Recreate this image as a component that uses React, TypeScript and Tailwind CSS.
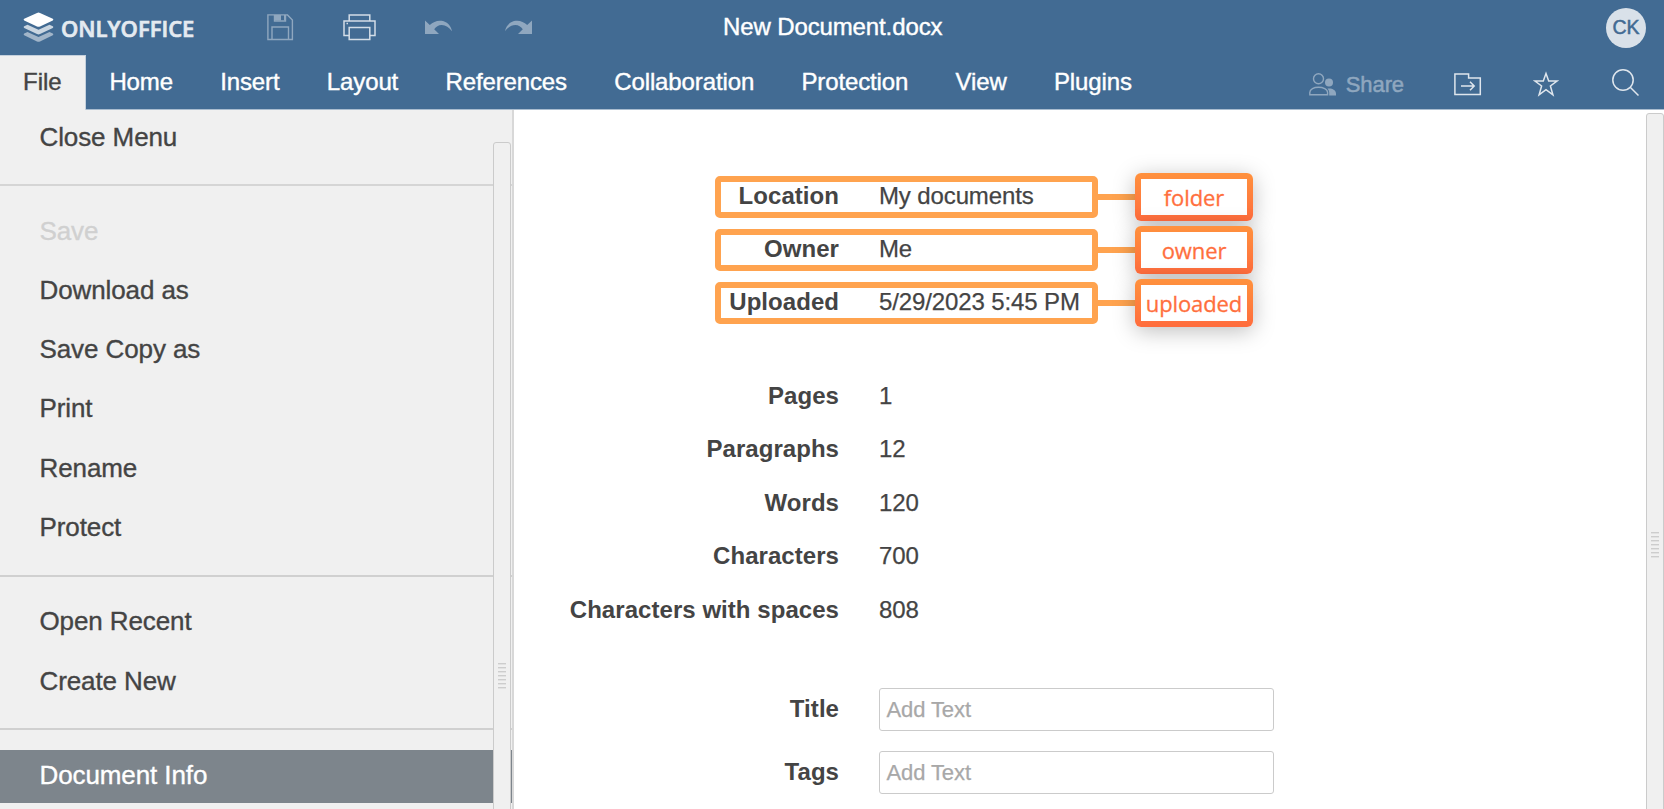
import React from "react";

const tabs = ["Home", "Insert", "Layout", "References", "Collaboration", "Protection", "View", "Plugins"];

const located = [
  { label: "Location", value: "My documents", tag: "folder" },
  { label: "Owner", value: "Me", tag: "owner" },
  { label: "Uploaded", value: "5/29/2023 5:45 PM", tag: "uploaded" },
];

const stats = [
  ["Pages", "1"],
  ["Paragraphs", "12"],
  ["Words", "120"],
  ["Characters", "700"],
  ["Characters with spaces", "808"],
];

function Logo() {
  return (
    <div className="flex items-center pl-[23px] w-[267px]">
      <svg width="31" height="31" viewBox="0 0 31 31" fill="#fff">
        <path opacity=".5" d="M1.2 21.6 4.5 20 15.500 25 26.500 20l3.300 1.600q1.200.8 0 1.600L17 29.500q-1.500.7-3 0L1.200 23.200q-1.200-.8 0-1.600z" />
        <path opacity=".72" d="M1.200 14.300 4.500 12.700 15.500 17.700 26.500 12.700l3.300 1.600q1.200.8 0 1.600L17 22.100q-1.500.7-3 0L1.200 15.900q-1.200-.8 0-1.600z" />
        <path d="M1.200 6.800 14 .9q1.500-.7 3 0l12.800 5.900q1.200.8 0 1.600L17 14.500q-1.500.7-3 0L1.200 8.400q-1.200-.8 0-1.600z" />
      </svg>
      <span className="ml-[7px] font-['Open_Sans',sans-serif] font-semibold text-[22px] leading-[30px] tracking-[0.02px] text-[#e4eaf0] whitespace-nowrap [-webkit-text-stroke:0.7px_#e4eaf0]">
        ONLYOFFICE
      </span>
    </div>
  );
}

function SaveIcon() {
  return (
    <svg width="27" height="27" viewBox="0 0 27 27" fill="none" stroke="#8fa7bf" strokeWidth="1.4">
      <path d="M.9.9H20.500L25.400 6V25.500H.9z" />
      <path d="M5 25.500V13H21.500V25.500" />
      <path d="M7.500.9V7H18.500V.9" />
      <path d="M8 1h6v5.500H8zM17 1h1.500v5.500H17z" fill="#8fa7bf" stroke="none" />
    </svg>
  );
}

function PrintIcon() {
  return (
    <svg width="34" height="27" viewBox="0 0 34 27" fill="none" stroke="#d3dde7" strokeWidth="1.5">
      <path d="M6.200 7V.9H26.800V7" />
      <path d="M6.200 21.500H1V7H32V21.500H26.800" />
      <path d="M6.200 13.500H26.800V25.500H6.200z" />
      <path d="M3.500 9.500h1.500" />
    </svg>
  );
}

function UndoIcon({ flip }: { flip?: boolean }) {
  return (
    <svg width="27" height="15" viewBox="0 0 27 15" fill="#8fa7bf" className={flip ? "-scale-x-100" : ""}>
      <path d="M0 .6 4.800 5.100C8.500 1.300 13.500-.2 18 1.100 23 2.600 26 6.500 27 11.300 24.200 7.300 20.500 4.900 16.500 5 13.500 5.100 11 6.500 9.200 9.300L14 14H0z" />
    </svg>
  );
}

function Header() {
  return (
    <header className="shrink-0 bg-[#426b93] text-white">
      <div className="flex h-[55px] items-center">
        <Logo />
        <div className="flex items-center w-[456px]">
          <SaveIcon />
          <div className="ml-[49px]"><PrintIcon /></div>
          <div className="ml-[48px]"><UndoIcon /></div>
          <div className="ml-[53px]"><UndoIcon flip /></div>
        </div>
        <div className="-mt-px text-[24px] leading-[28px] tracking-[-0.12px] [-webkit-text-stroke:0.4px_#fff]">New Document.docx</div>
        <div className="ml-auto mr-[18px] flex size-10 items-center justify-center rounded-full bg-[#d9e1e9] text-[19.5px] text-[#426b93]">
          <span className="[-webkit-text-stroke:0.5px_#426b93]">CK</span>
        </div>
      </div>
      <div className="flex h-[55px]">
        <div className="flex w-[86px] border-r border-t border-[#c5d1dd] bg-[#f0f0f0] pl-[23px] pt-[11px] text-[24px] leading-[30px] text-[#444] [-webkit-text-stroke:0.4px_#444]">
          File
        </div>
        <div className="flex flex-1 border-b border-[#a9bccf]">
          <div className="flex pl-px pt-[11.5px]">
            {tabs.map((t) => (
              <div key={t} className="pl-[22.4px] pr-[24.9px] text-[24px] leading-[30px] tracking-[-0.12px] [-webkit-text-stroke:0.4px_#fff]">{t}</div>
            ))}
          </div>
          <div className="ml-auto flex items-center pr-[25px] pt-[4px]">
            <svg width="28" height="23" viewBox="0 0 28 23" fill="none" stroke="#8fa7bf" strokeWidth="1.4">
              <circle cx="9.500" cy="5.700" r="5" />
              <path d="M.8 21.700V19.500C.8 16 5 14.200 9.500 14.200S18.600 16 18.600 19.500V21.700z" />
              <circle cx="20" cy="9.500" r="4" fill="#8fa7bf" stroke="none" />
              <path d="M20 15.500c4 0 7 2 7 5V22.500h-6.800v-3q0-2-1.700-3.900z" fill="#8fa7bf" stroke="none" />
            </svg>
            <span className="ml-[9px] mt-[2px] text-[22px] leading-[28px] tracking-[-0.1px] text-[#8fa7bf] [-webkit-text-stroke:0.5px_#8fa7bf]">Share</span>
            <svg className="ml-[50px]" width="28" height="23" viewBox="0 0 28 23" fill="none" stroke="#dfe6ed" strokeWidth="1.5">
              <path d="M.9.9H14.600V4.900H26.300V21.600H.9z" />
              <path d="M7 13H20M16 8.700 20.200 13 16 17.300" />
            </svg>
            <svg className="ml-[51px]" width="26" height="26" viewBox="0 0 26 26" fill="none" stroke="#dfe6ed" strokeWidth="1.5">
              <path d="M13 2.500 15.700 10H24L17.400 15 19.900 23.800 13 18.600 6.100 23.800 8.600 15 2 10H10.300z" />
            </svg>
            <svg className="ml-[53px] -mt-[3px]" width="27" height="27" viewBox="0 0 27 27" fill="none" stroke="#dfe6ed" strokeWidth="1.5">
              <circle cx="11" cy="11" r="10.200" />
              <path d="M18.200 18.200 26.500 26.500" />
            </svg>
          </div>
        </div>
      </div>
    </header>
  );
}

function Item({ children, state }: { children: string; state?: "disabled" | "active" }) {
  const tone =
    state === "disabled" ? "text-[#d0d0d0]" : state === "active" ? "bg-[#7d858c] text-white" : "text-[#444]";
  return (
    <div className={"h-[53.5px] shrink-0 pl-[39.5px] text-[26px] leading-[50px] tracking-[-0.1px] [-webkit-text-stroke-width:0.35px] " + tone}>
      {children}
    </div>
  );
}

function Grip() {
  return (
    <div className="flex w-2 flex-col gap-[2px]">
      {[0, 1, 2, 3, 4, 5, 6].map((i) => (
        <div key={i} className="h-[2px] border-b border-[#e2e2e2] bg-[#cdcdcd]" />
      ))}
    </div>
  );
}

function Sidebar() {
  return (
    <aside className="relative w-[514px] shrink-0 overflow-hidden border-r-2 border-[#d8d8d8] bg-[#f0f0f0]">
      <nav className="flex flex-col pt-[1.500px]">
        <Item>Close Menu</Item>
        <div className="mb-[19.500px] mt-[19px] h-[2px] shrink-0 bg-[#d5d5d5]" />
        <div className="flex flex-col gap-[5.800px]">
          <Item state="disabled">Save</Item>
          <Item>Download as</Item>
          <Item>Save Copy as</Item>
          <Item>Print</Item>
          <Item>Rename</Item>
          <Item>Protect</Item>
        </div>
        <div className="mb-[19px] mt-[20px] h-[2px] shrink-0 bg-[#d0d0d0]" />
        <div className="flex flex-col gap-[5.800px]">
          <Item>Open Recent</Item>
          <Item>Create New</Item>
        </div>
        <div className="mb-[19.500px] mt-[19px] h-[2px] shrink-0 bg-[#d0d0d0]" />
        <Item state="active">Document Info</Item>
      </nav>
      <div className="absolute left-[493px] top-[32px] flex h-[1042px] w-[18px] justify-center rounded-[3px] border border-[#cbcbcb] bg-[#f0f0f0] pt-[520px]">
        <Grip />
      </div>
    </aside>
  );
}

function Label({ children }: { children: string }) {
  return <div className="w-[325px] shrink-0 text-right font-bold tracking-[0.05px]">{children}</div>;
}

function Value({ children }: { children: string }) {
  return <div className="tracking-[-0.12px] [-webkit-text-stroke:0.25px_#444]">{children}</div>;
}

function Callout({ tag }: { tag: string }) {
  return (
    <div className="absolute left-[201px] top-[4px] flex items-center">
      <div className="h-[42px] w-[383px] rounded-[5px] border-[6px] border-[#ffa34f]" />
      <div className="h-[6px] w-[37px] bg-[#ffa34f]" />
      <div className="h-[48px] w-[118px] rounded-[6px] bg-linear-to-b from-[#ff913d] to-[#ff6c3d] p-[6px] shadow-[0_4px_22px_rgba(0,0,0,0.26)]">
        <div className="flex h-full items-center justify-center bg-white font-['Open_Sans',sans-serif] text-[22px] leading-[30px] text-[#ff6f3d]">
          <span className="tracking-[-0.1px] [-webkit-text-stroke:0.3px_#ff6f3d]">{tag}</span>
        </div>
      </div>
    </div>
  );
}

function Info() {
  return (
    <main className="relative flex-1 overflow-hidden bg-white pt-[59px] text-[24px] leading-[53.400px] text-[#444]">
      {located.map((r) => (
        <div key={r.label} className="relative flex h-[53.200px] gap-[40px]">
          <Label>{r.label}</Label>
          <Value>{r.value}</Value>
          <Callout tag={r.tag} />
        </div>
      ))}
      <div className="mt-[40.400px]">
        {stats.map(([label, value]) => (
          <div key={label} className="flex h-[53.500px] gap-[40px]">
            <Label>{label}</Label>
            <Value>{value}</Value>
          </div>
        ))}
      </div>
      <div className="mt-[51.100px] flex flex-col gap-[20px]">
        {["Title", "Tags"].map((label) => (
          <div key={label} className="flex h-[43px] gap-[40px] leading-[41px]">
            <Label>{label}</Label>
            <div className="w-[395px] rounded-[3px] border border-[#cbcbcb] pl-[6.500px] text-[22px] leading-[41px] tracking-[-0.1px] text-[#a8a8a8] [-webkit-text-stroke:0.25px_#a8a8a8]">
              Add Text
            </div>
          </div>
        ))}
      </div>
      <div className="absolute left-[1132px] top-[3px] flex h-[864px] w-[18px] justify-center rounded-[3px] border border-[#cbcbcb] bg-[#f0f0f0] pt-[418px]">
        <Grip />
      </div>
    </main>
  );
}

export default function App() {
  return (
    <div className="flex h-screen w-full flex-col overflow-hidden bg-white font-['Liberation_Sans',Arial,sans-serif]">
      <Header />
      <div className="flex min-h-0 flex-1">
        <Sidebar />
        <Info />
      </div>
    </div>
  );
}
